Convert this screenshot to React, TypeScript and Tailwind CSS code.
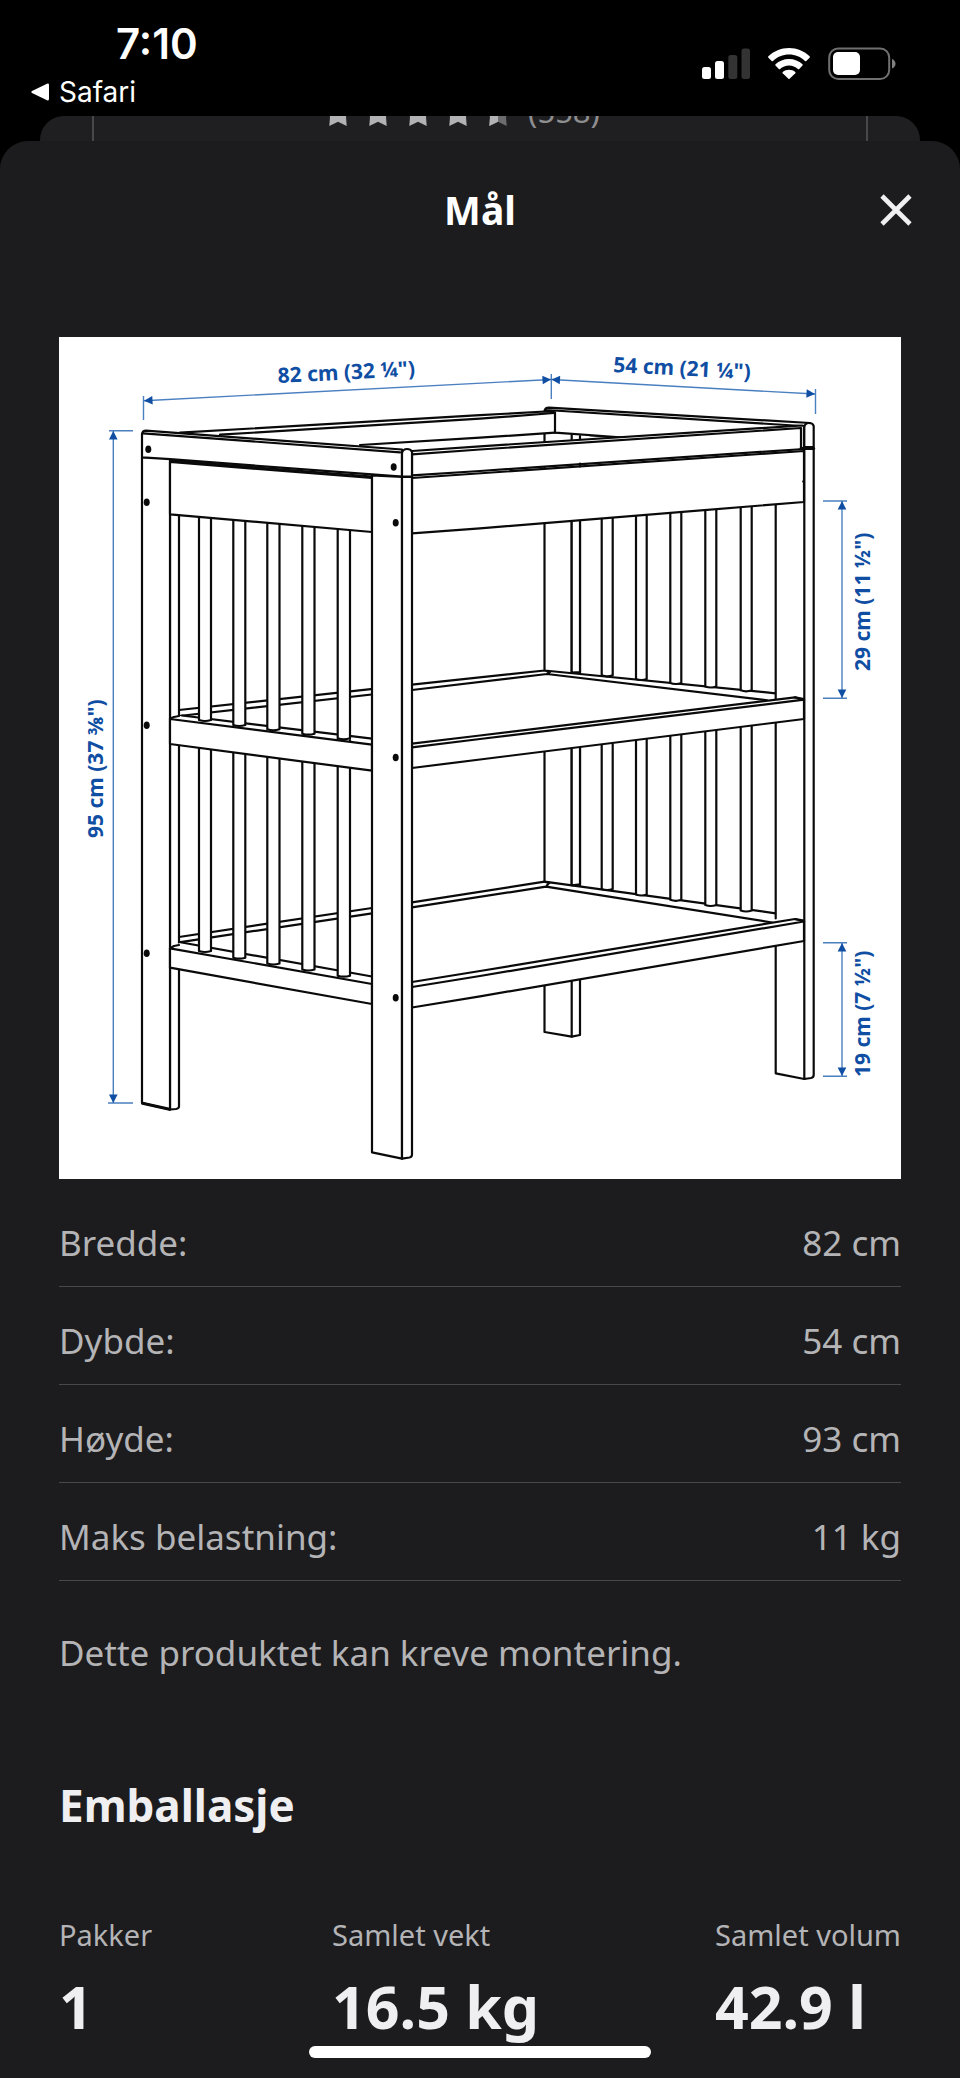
import clsx from 'clsx';

const measurements = [
  { label: 'Bredde:', value: '82 cm' },
  { label: 'Dybde:', value: '54 cm' },
  { label: 'Høyde:', value: '93 cm' },
  { label: 'Maks belastning:', value: '11 kg' },
];

const packaging = [
  { label: 'Pakker', value: '1' },
  { label: 'Samlet vekt', value: '16.5 kg' },
  { label: 'Samlet volum', value: '42.9 l' },
];

function StatusBar() {
  return (
    <div className="flex h-[116px] justify-between font-['Inter',sans-serif] text-white">
      <div className="flex flex-col items-start pt-5">
        <span className="pl-[116px] text-[42px] leading-[48px] font-semibold">7:10</span>
        <button className="mt-[6px] flex items-center gap-[10px] pl-[31px] text-[28px] leading-[36px]">
          <svg viewBox="0 0 18 18" className="h-[18px] w-[18px]" fill="currentColor" aria-hidden="true">
            <path d="M1 8 16 0.8Q18 0 18 2V16Q18 18 16 17.2L1 10Q-0.4 9 1 8Z" />
          </svg>
          Safari
        </button>
      </div>

      <div className="flex items-start gap-[18px] pt-[47px] pr-16">
        <svg viewBox="0 0 48 32" className="h-8 w-12" fill="#fff" aria-hidden="true">
          <rect x="0" y="20" width="9" height="12" rx="2.5" />
          <rect x="13" y="14" width="9" height="18" rx="2.5" />
          <rect x="26.300" y="8" width="9" height="24" rx="2.5" fill="#333" />
          <rect x="39.500" y="1.500" width="8.500" height="30.500" rx="2.5" fill="#333" />
        </svg>
        <svg viewBox="0 0 42 32" className="h-8 w-[42px]" fill="#fff" aria-hidden="true">
          <path d="M21 1C29 1 36.300 4.200 41.600 9.300Q42.200 10 41.600 10.700L38.300 14Q37.700 14.500 37 14C32.800 10 27.200 7.600 21 7.600S9.200 10 5 14Q4.300 14.500 3.700 14L0.400 10.700Q-0.200 10 0.400 9.300C5.700 4.200 13 1 21 1Z" />
          <path d="M21 12C26.200 12 31 14 34.500 17.300Q35.100 18 34.500 18.600L31.200 21.900Q30.600 22.400 29.900 21.900C27.500 19.700 24.400 18.400 21 18.400S14.500 19.700 12.100 21.900Q11.400 22.400 10.800 21.900L7.500 18.600Q6.900 18 7.500 17.300C11 14 15.800 12 21 12Z" />
          <path d="M21 22.700C23.400 22.700 25.600 23.600 27.300 25Q27.800 25.600 27.300 26.200L21.600 31.700Q21 32.200 20.400 31.700L14.700 26.200Q14.200 25.600 14.700 25C16.400 23.600 18.600 22.700 21 22.700Z" />
        </svg>
        <svg viewBox="0 0 68 34" className="h-[34px] w-[68px]" aria-hidden="true">
          <rect x="1.200" y="1.500" width="60" height="30.500" rx="9" fill="none" stroke="#707070" strokeWidth="2" />
          <rect x="5" y="5" width="27" height="23" rx="5" fill="#fff" />
          <path d="M64 12Q67.500 13.500 67.500 16.800T64 21.500Z" fill="#808080" />
        </svg>
      </div>
    </div>
  );
}

function Star({ half = false }: { half?: boolean }) {
  return (
    <svg viewBox="0 0 28 28" className="h-7 w-7" aria-hidden="true">
      <polygon
        points="14,0 18,9 28,10.300 22,17.500 22.700,27 14,22.700 5.300,27 6,17.500 0,10.300 10,9"
        fill={half ? '#6c6c6e' : '#b2b2b4'}
      />
      {half && <polygon points="14,0 14,22.700 5.300,27 6,17.500 0,10.300 10,9" fill="#b2b2b4" />}
    </svg>
  );
}

// Product page peeking out behind the open sheet
function CardBehind() {
  return (
    <div className="mx-10 h-[25px] overflow-hidden rounded-t-[24px] bg-[#1f1f21] px-[52px]">
      <div className="flex h-full items-end justify-center border-x-2 border-[#48484a] pr-9 pb-[14px]">
        <div className="flex items-end gap-3">
          {[0, 1, 2, 3, 4].map((i) => (
            <Star key={i} half={i === 4} />
          ))}
        </div>
        <span className="ml-4 text-[31px] leading-[32px] text-[#8e8e90]">(558)</span>
      </div>
    </div>
  );
}

// Slats are [left x, right x, bottom y of upper half, bottom y of lower half]
const leftSlats = [
  [199, 211, 721, 952],
  [233.3, 245.3, 726, 958.7],
  [267.3, 279.5, 730.3, 964.5],
  [302.3, 314.5, 734.7, 970.5],
  [337.7, 350, 739.3, 976.7],
];

const rightSlats = [
  [601.7, 612.7, 676.3, 890],
  [636, 646.7, 680, 895.5],
  [670.3, 681.3, 684, 900.8],
  [705.3, 716.3, 687.5, 906],
  [740.7, 751.7, 691.3, 911.5],
];

const screws = [
  [148.3, 449.3],
  [146.7, 502.3],
  [146.7, 725.3],
  [146.7, 953.3],
  [393.7, 467],
  [395.7, 522.7],
  [395.7, 757.5],
  [395.7, 997.7],
];

function Slat({ x1, x2, top, bottom }: { x1: number; x2: number; top: number; bottom: number }) {
  return <path d={`M${x1} ${top}V${bottom - 1}Q${(x1 + x2) / 2} ${bottom + 1} ${x2} ${bottom - 1}V${top}`} />;
}

function Arrow({ x1, y1, x2, y2 }: { x1: number; y1: number; x2: number; y2: number }) {
  const angle = (Math.atan2(y2 - y1, x2 - x1) * 180) / Math.PI;
  return (
    <g>
      <path d={`M${x1} ${y1}L${x2} ${y2}`} stroke="#4a7fc0" strokeWidth="1.4" />
      <path d="M0 0 8.500 -4.300V4.300Z" fill="#0f4ea3" transform={`translate(${x1} ${y1}) rotate(${angle})`} />
      <path d="M0 0 8.500 -4.300V4.300Z" fill="#0f4ea3" transform={`translate(${x2} ${y2}) rotate(${angle + 180})`} />
    </g>
  );
}

function ChangingTableDrawing() {
  return (
    <svg viewBox="59 337 842 842" className="block w-full bg-white" role="img" aria-label="Stellebord med mål">
      <g fill="#fff" stroke="#0a0a0a" strokeWidth="2.2" strokeLinejoin="round" strokeLinecap="round">
        {/* Back post */}
        <path d="M544.500 434V1032L571.700 1036.700 580 1035V436" />
        <path d="M571.700 435V1036.700" />

        {/* Lower shelf */}
        <path
          stroke="none"
          d="M179 937 372 908 544.500 881.700 775.700 913.300 803.500 921V941L412 1007.500 372 1004 171 968Z"
        />
        <path
          fill="none"
          d="M179 937 372 908 412 902.300 544.500 881.700 775.700 913.300M179 942.300 372 913.300 412 907.300 546 886.700 772 922.500M544.500 881.700 549 883 546 886.700"
        />
        <path d="M571.700 740V885.300L580 884.300V740" />
        {rightSlats.map(([x1, x2, , bottom]) => (
          <Slat key={x1} x1={x1} x2={x2} top={700} bottom={bottom} />
        ))}

        {/* Middle shelf */}
        <path
          stroke="none"
          d="M179 710 412 684.700 544.500 670.500 775.700 693.300 803.500 699V719L412 768 372 770.700 170 744Z"
        />
        <path
          fill="none"
          d="M179 710 412 684.700 544.500 670.500 775.700 693.300M179 716 412 690 547 674 767 700.300M544.500 670.500 550 672 547 674"
        />
        <path d="M571.700 490V672.700L580 672V490" />
        {rightSlats.map(([x1, x2, bottom]) => (
          <Slat key={x1} x1={x1} x2={x2} top={480} bottom={bottom} />
        ))}

        {/* Right post */}
        <path stroke="none" d="M775.700 460H804V1079L775.700 1073Z" />
        <path fill="none" d="M775.700 460V699M775.700 710V918.500M775.700 940V1073.300L804.300 1079" />
        <path d="M804.300 448V1079L811 1078Q813.700 1077.500 813.700 1075V448Z" />

        {/* Front rails of both shelves */}
        <path d="M412 743.700 480 735.500 795 697.300 804 699V719L480 759.500 412 768Z" />
        <path fill="none" d="M412 747.300 480 739 804 699.700M795 697.300 804 700" />
        <path d="M412 982 480 971 795 919 804 920.500V941L480 996.300 412 1007.500Z" />
        <path fill="none" d="M412 987 480 976 804 921.500M795 919 804 921.500" />

        {/* Left post */}
        <path d="M170 458V1109.500L176 1109Q179 1108.500 179 1106.500V460Z" />
        <path d="M142 457V1103L170 1109.500V458Z" />
        <path fill="none" strokeWidth="3" d="M142.500 1103.300 169.500 1109.300" />

        {/* Lower left rail with slats */}
        <path stroke="none" d="M171 946 180 943 195 944 200 953 171 949Z" />
        <path d="M170 948.300 372 984V1004L170 967.700Z" />
        <path fill="none" d="M179 942 372 976.500M170 948.300 174 946 179 945" />
        {leftSlats.map(([x1, x2, , bottom]) => (
          <Slat key={x1} x1={x1} x2={x2} top={740} bottom={bottom} />
        ))}

        {/* Middle left rail with slats */}
        <path stroke="none" d="M171 717 179 716 195 717 200 722H171Z" />
        <path d="M170 719 372 744.700V770.700L170 744Z" />
        <path fill="none" d="M182 715.500 372 738.700M170 718.500 174 717 179 716" />
        {leftSlats.map(([x1, x2, bottom]) => (
          <Slat key={x1} x1={x1} x2={x2} top={500} bottom={bottom} />
        ))}

        {/* Back rail and far end of the tray */}
        <path
          fill="none"
          d="M180 432.700 480 415.200 554 411M220 434.700 480 418.700 554 413M360 445 480 437.700 555 432.700"
        />
        <path
          fill="none"
          d="M544.500 411Q545 407.700 549 407.700L810 423M546 410 802 426M555 411.700V432.700L623 437.500M590 435.500 620 437.300"
        />

        {/* Front rail and apron */}
        <path d="M412 478 804 451V502L480 528.300 412 533.300Z" />
        <path d="M412 451 480 446.300 802 425.500 804 426V449L480 471 412 475.300Z" />
        <path fill="none" d="M412 454.300 480 449.500 801 428V449M580 463.500V466.500" />
        <path d="M804.300 447V427Q805 423 809 423T813.700 426V447Z" />
        <path fill="none" d="M801 448.500H813.700" strokeWidth="3" />

        {/* Left rail and apron */}
        <path d="M170 462 372 478V532L170 514.300Z" />
        <path d="M142 457.300V434Q142.500 430.700 146 430.700L402 449.500V476.700L170 459.200Z" />
        <path fill="none" d="M143 433.300 400 452.300M170 460.700 372 476.500" />

        {/* Front post */}
        <path d="M372 475.500V1152.300L402 1158.700V477Z" />
        <path d="M402 477V1158.700L409.500 1157.500Q412 1157 412 1154.500V477Z" />
        <path d="M402 476.700V453Q403 449 407 449T412 452V476.700Z" />
      </g>

      <g fill="#0a0a0a">
        {screws.map(([cx, cy]) => (
          <ellipse key={`${cx}-${cy}`} cx={cx} cy={cy} rx="3" ry="3.8" />
        ))}
        <circle cx="803.500" cy="481.500" r="1.300" />
      </g>

      {/* Dimension lines */}
      <path
        fill="none"
        stroke="#4a7fc0"
        strokeWidth="1.4"
        d="M143.500 396V420M551.300 374V399M815.500 389V414M109 430.700H133M108 1103H133M823 501H847M823 698.300H847M823 942.700H847M823 1076.300H847"
      />
      <Arrow x1={144} y1={400.7} x2={551} y2={379.5} />
      <Arrow x1={551.5} y1={379.5} x2={815} y2={394} />
      <Arrow x1={113.3} y1={431} x2={113.3} y2={1103} />
      <Arrow x1={842} y1={501} x2={842} y2={698} />
      <Arrow x1={842} y1={943} x2={842} y2={1076} />

      <g fill="#0f4ea3" fontSize="21" fontWeight="700">
        <text transform="translate(278 383) rotate(-3)">82 cm (32 ¼")</text>
        <text transform="translate(613 372) rotate(3)">54 cm (21 ¼")</text>
        <text transform="translate(103 838) rotate(-90)">95 cm (37 ⅜")</text>
        <text transform="translate(870 671) rotate(-90)">29 cm (11 ½")</text>
        <text transform="translate(870 1077) rotate(-90)">19 cm (7 ½")</text>
      </g>
    </svg>
  );
}

export default function App() {
  return (
    <div className="relative flex min-h-screen flex-col bg-black font-['Noto_Sans',sans-serif]">
      <StatusBar />
      <CardBehind />

      <main className="grow rounded-t-[28px] bg-[#1c1c1e] pb-9 text-[#b4b4b6]">
        <header className="grid h-[137px] grid-cols-[1fr_auto_1fr] items-center pr-[34px] pl-[34px]">
          <h1 className="col-start-2 text-[39px] leading-[52px] font-bold text-white">Mål</h1>
          <button aria-label="Lukk" className="flex h-[60px] w-[60px] items-center justify-center justify-self-end">
            <svg viewBox="0 0 32 32" className="h-8 w-8" aria-hidden="true">
              <path d="M2 2 30 30M30 2 2 30" stroke="#f0f0f2" strokeWidth="4.600" />
            </svg>
          </button>
        </header>

        <div className="px-[59px] pt-[59px]">
          <ChangingTableDrawing />

          <table className="mt-[10px] w-full text-[35px] leading-[40px]">
            <tbody>
              {measurements.map((row) => (
                <tr key={row.label} className="border-b border-[#48484a]">
                  <th scope="row" className="pt-[34px] pb-[23px] text-left font-normal">
                    {row.label}
                  </th>
                  <td className="pt-[34px] pb-[23px] text-right">{row.value}</td>
                </tr>
              ))}
            </tbody>
          </table>

          <p className="mt-[52px] text-[35px] leading-[40px]">Dette produktet kan kreve montering.</p>

          <h2 className="mt-[106px] text-[44px] leading-[52px] font-bold text-[#efeff1]">Emballasje</h2>

          <dl className="mt-[84px] flex justify-between">
            {packaging.map((item, i) => (
              <div key={item.label} className={clsx('flex flex-col', i === 1 && 'pl-1')}>
                <dt className="text-[29px] leading-[40px]">{item.label}</dt>
                <dd className="mt-[15px] text-[59px] leading-[72px] font-bold text-[#efeff1]">{item.value}</dd>
              </div>
            ))}
          </dl>
        </div>
      </main>

      {/* Home indicator */}
      <div className="fixed bottom-5 left-1/2 h-3 w-[342px] -translate-x-1/2 rounded-full bg-white" />
    </div>
  );
}
